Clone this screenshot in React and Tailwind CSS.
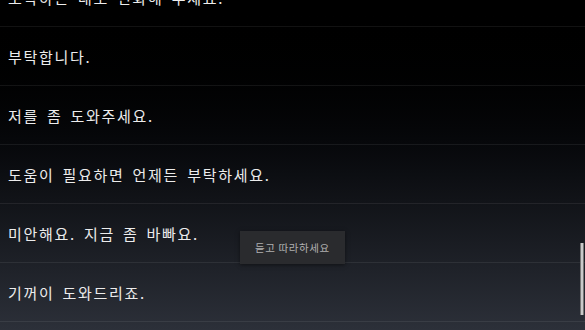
import React from "react";

const rows = [
  "도착하는 대로 전화해 주세요.",
  "부탁합니다.",
  "저를 좀 도와주세요.",
  "도움이 필요하면 언제든 부탁하세요.",
  "미안해요. 지금 좀 바빠요.",
  "기꺼이 도와드리죠.",
];

export default function App() {
  return (
    <div
      className="relative w-[585px] h-[330px] overflow-hidden bg-gradient-to-b from-[#000000] to-[#2c3039]"
      style={{ fontFamily: '"Noto Sans CJK KR", "Noto Sans", sans-serif' }}
    >
      <div className="flex flex-col mt-[-32px]">
        {rows.map((t) => (
          <div
            key={t}
            className="h-[59px] shrink-0 flex items-center pl-[8px] pt-[2px] border-b border-white/[0.07] text-[15px] text-[#ececec] tracking-[1.7px] [word-spacing:3px]"
          >
            {t}
          </div>
        ))}
      </div>
      <div className="absolute left-[240px] top-[231px] w-[105px] h-[33px] flex items-center justify-center bg-[#2a2b2e] shadow-[0_1px_4px_rgba(0,0,0,0.5)] text-[10.5px] text-[#b0b0b0] tracking-[0.6px]">
        듣고 따라하세요
      </div>
      <div className="absolute right-[1px] top-[243px] w-[4px] h-[72px] bg-[#c9c9c9] border-x border-[#777]" />
    </div>
  );
}
